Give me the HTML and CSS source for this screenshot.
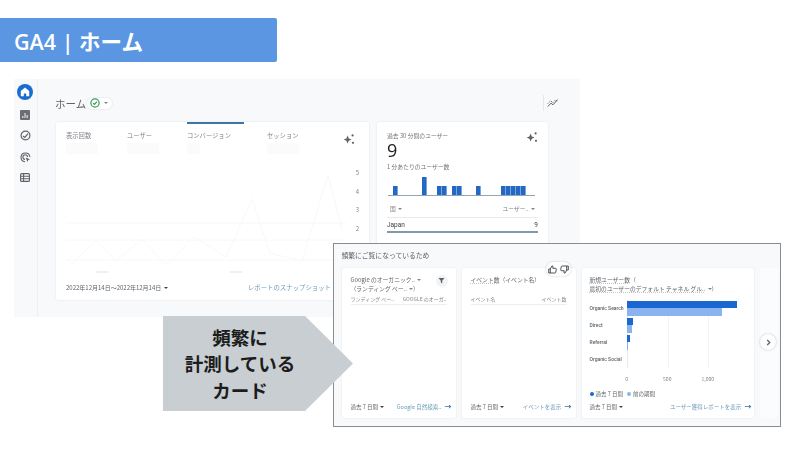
FILE: index.html
```html
<!DOCTYPE html>
<html lang="ja">
<head>
    <meta charset="UTF-8">
    <title>GA4 | ホーム</title>
    <link rel="stylesheet" href="styles.css">
</head>
<body>

<div class="slide">
    <h1 class="banner">GA4 | ホーム</h1>

    <!-- back screenshot -->
    <div class="home-shot">
        <div class="side">
            <span class="side-home">
                <svg width="12" height="12" viewBox="0 0 12 12"><path d="M6 1.5 1.8 5v5.2h3V7.4h2.4v2.8h3V5z" fill="#fff"/></svg>
            </span>
            <svg width="10" height="10" viewBox="0 0 10 10"><rect width="10" height="10" rx="1" fill="#6b6f73"/><path d="M2 8V6h1.5v2zM4.3 8V3h1.4v5zM6.5 8V5H8v3z" fill="#c9cbce"/></svg>
            <svg width="11" height="11" viewBox="0 0 11 11" fill="none" stroke="#5f6368" stroke-width="1.2"><circle cx="5.5" cy="5.5" r="4.4"/><path d="M3 6l1.8 1.4L8 3.6"/></svg>
            <svg width="11" height="11" viewBox="0 0 11 11" fill="none" stroke="#5f6368" stroke-width="1.1"><path d="M5 9.8A4.4 4.4 0 1 1 9.8 5"/><path d="M5 7.4A2.3 2.3 0 1 1 7.5 5"/><path d="M5.6 5.6l4.4 1.7-1.8.7-.7 1.9z" fill="#5f6368" stroke="none"/></svg>
            <svg width="10" height="9" viewBox="0 0 10 9" fill="none" stroke="#5f6368" stroke-width="1.1"><rect x=".6" y=".6" width="8.8" height="7.8" rx="1"/><path d="M.6 3.2h8.8M.6 5.8h8.8M3.6.6v7.8"/></svg>
        </div>
        <div class="home-main">
            <div class="home-head">
                <span class="home-title">ホーム</span>
                <span class="status-chip">
                    <svg width="10" height="10" viewBox="0 0 9 9" fill="none" stroke="#3c9a5a" stroke-width="1.1"><circle cx="4.5" cy="4.5" r="3.7"/><path d="M2.8 4.6l1.2 1.1 2.2-2.3"/></svg>
                    <i class="caret"></i>
                </span>
                <span class="trend">
                    <svg width="12" height="10" viewBox="0 0 12 10" fill="none" stroke="#5f6368" stroke-width="1"><path d="M.8 8.6l3.2-3.4 2 1.6L10.6 1.6"/><path d="M.8 5.6L3.6 2.8l2.4 1.8 2.2-2.4 2.8 1.4" stroke-dasharray="1.2 1"/></svg>
                </span>
            </div>
            <div class="home-cards">
                <div class="card overview">
                    <div class="tabs">
                        <div class="tab tab-views">表示回数<span class="ghost-num"></span></div>
                        <div class="tab tab-users">ユーザー<span class="ghost-num"></span></div>
                        <div class="tab tab-conv">コンバージョン<span class="ghost-num short"></span></div>
                        <div class="tab tab-sess">セッション<span class="ghost-num"></span></div>
                        <svg class="sparkle" width="12" height="12" viewBox="0 0 12 12" fill="#5f6368"><path d="M4.6 2.6 5.8 5.4 8.6 6.6 5.8 7.8 4.6 10.6 3.4 7.8.6 6.6 3.4 5.4z"/><circle cx="9.6" cy="2.4" r="1.1"/><circle cx="10" cy="9.8" r="1.1"/></svg>
                    </div>
                    <div class="line-chart">
                        <svg width="280" height="112" viewBox="0 0 280 112" fill="none" stroke="#f8f8f9">
                            <path d="M0 54H280M0 71H280M0 91H280"/>
                            <path d="M4 96 30 72 50 92 76 70 100 96 128 68 160 88 186 30 204 84 236 92 262 6 276 60"/>
                            <path d="M30 103H42M164 103H176" stroke="#eeeff0" stroke-width="2"/>
                        </svg>
                        <div class="y-axis"><span>5</span><span>4</span><span>3</span><span>2</span></div>
                    </div>
                    <div class="card-foot">
                        <span>2022年12月14日～2022年12月14日 <i class="caret dark"></i></span>
                        <span class="link">レポートのスナップショット</span>
                    </div>
                </div>
                <div class="card realtime">
                    <div class="rt-top">
                        <span class="rt-label">過去 30 分間のユーザー</span>
                        <svg width="12" height="12" viewBox="0 0 12 12" fill="#5f6368"><path d="M4.6 2.6 5.8 5.4 8.6 6.6 5.8 7.8 4.6 10.6 3.4 7.8.6 6.6 3.4 5.4z"/><circle cx="9.6" cy="2.4" r="1.1"/><circle cx="10" cy="9.8" r="1.1"/></svg>
                    </div>
                    <div class="rt-num">9</div>
                    <div class="rt-label">1 分あたりのユーザー数</div>
                    <svg class="rt-bars" width="148" height="20" viewBox="0 0 148 20">
                        <g fill="#2468c4">
                            <rect x="5" y="10" width="4.6" height="9"/>
                            <rect x="34" y="1" width="4.6" height="18"/>
                            <rect x="49" y="10" width="4.6" height="9"/>
                            <rect x="54" y="10" width="4.6" height="9"/>
                            <rect x="64" y="10" width="4.6" height="9"/>
                            <rect x="69" y="10" width="4.6" height="9"/>
                            <rect x="88" y="10" width="4.6" height="9"/>
                            <rect x="113" y="10" width="4.6" height="9"/>
                            <rect x="118" y="10" width="4.6" height="9"/>
                            <rect x="123" y="10" width="4.6" height="9"/>
                            <rect x="128" y="10" width="4.6" height="9"/>
                            <rect x="133" y="10" width="4.6" height="9"/>
                        </g>
                        <path d="M0 19.5H147" stroke="#8fa6b4"/>
                    </svg>
                    <div class="rt-head">
                        <span>国 <i class="caret"></i></span>
                        <span>ユーザー.. <i class="caret"></i></span>
                    </div>
                    <div class="rt-row">
                        <span>Japan</span>
                        <span>9</span>
                    </div>
                </div>
            </div>
        </div>
    </div>

    <!-- front screenshot -->
    <div class="freq-shot">
        <div class="freq-title">頻繁にご覧になっているため</div>
        <div class="freq-cards">
            <div class="card freq-card card-a">
                <div class="fc-title">
                    <span>Google のオーガニック.. <i class="caret"></i></span>
                    <span>（ランディング ペー.. <i class="caret"></i>）</span>
                    <span class="filter-btn">
                        <svg width="7" height="7" viewBox="0 0 7 7"><path d="M.5 1h6L4.2 3.8V6.4L2.8 5.6V3.8z" fill="#5f6368"/></svg>
                    </span>
                </div>
                <div class="fc-head"><span>ランディング ペー..</span><span>GOOGLE のオーガ..</span></div>
                <div class="fc-space"></div>
                <div class="fc-foot">
                    <span>過去 7 日間 <i class="caret dark"></i></span>
                    <span class="link">Google 自然検索.. <b class="arrow">→</b></span>
                </div>
            </div>
            <div class="card freq-card card-b">
                <div class="fc-title"><span><u>イベント数</u>（イベント名）</span></div>
                <div class="fc-head"><span>イベント名</span><span>イベント数</span></div>
                <div class="fc-space"></div>
                <div class="fc-foot">
                    <span>過去 7 日間 <i class="caret dark"></i></span>
                    <span class="link">イベントを表示 <b class="arrow">→</b></span>
                </div>
            </div>
            <div class="card freq-card card-c">
                <div class="fc-title">
                    <span><u>新規ユーザー数</u>（</span>
                    <span><u>最初のユーザーのデフォルト チャネル グル..</u> <i class="caret"></i>）</span>
                </div>
                <div class="bars">
                    <div class="bar-row"><span>Organic Search</span><div class="bar-pair"><i class="bar now" style="width:110px"></i><i class="bar prev" style="width:95px"></i></div></div>
                    <div class="bar-row"><span>Direct</span><div class="bar-pair"><i class="bar now" style="width:6px"></i><i class="bar prev" style="width:5px"></i></div></div>
                    <div class="bar-row"><span>Referral</span><div class="bar-pair"><i class="bar now" style="width:3px"></i><i class="bar prev" style="width:1px"></i></div></div>
                    <div class="bar-row"><span>Organic Social</span><div class="bar-pair"></div></div>
                </div>
                <div class="x-axis"><span>0</span><span>500</span><span>1,000</span></div>
                <div class="legend">
                    <span><i class="dot now"></i>過去 7 日間</span>
                    <span><i class="dot prev"></i>前の期間</span>
                </div>
                <div class="fc-foot">
                    <span>過去 7 日間 <i class="caret dark"></i></span>
                    <span class="link">ユーザー獲得レポートを表示 <b class="arrow">→</b></span>
                </div>
            </div>
            <div class="card card-d"></div>
        </div>
        <span class="thumbs">
            <svg width="9" height="9" viewBox="0 0 9 9" fill="none" stroke="#3c4043" stroke-width=".9"><path d="M.7 4h1.6v4H.7zM2.3 4 4 .8c.8 0 1.1.6 1 1.2L4.8 3.3h2.8c.5 0 .8.4.7.9L7.7 7.4c-.1.4-.4.6-.8.6H2.3"/></svg>
            <svg width="9" height="9" viewBox="0 0 9 9" fill="none" stroke="#3c4043" stroke-width=".9"><path d="M8.3 5H6.7V1h1.6zM6.7 5 5 8.2c-.8 0-1.1-.6-1-1.2l.2-1.3H1.4c-.5 0-.8-.4-.7-.9l.6-3.2c.1-.4.4-.6.8-.6h4.6"/></svg>
        </span>
        <span class="next-btn">
            <svg width="7" height="7" viewBox="0 0 7 7" fill="none" stroke="#5f6368" stroke-width="1.3"><path d="M2.2 1l2.6 2.5L2.2 6"/></svg>
        </span>
    </div>

    <div class="callout">
        <p>頻繁に<br>計測している<br>カード</p>
    </div>
</div>

</body>
</html>
```
FILE: styles.css
```css
* {
    box-sizing: border-box;
}
body {
    margin: 0;
    background-color: #fff;
    font-family: "Noto Sans CJK JP", "Noto Sans", sans-serif;
}
.slide {
    position: relative;
    width: 800px;
    height: 450px;
    overflow: hidden;
    background-color: #fff;
}

/* banner */
.banner {
    position: absolute;
    left: 0;
    top: 18px;
    width: 277px;
    height: 44px;
    margin: 0;
    padding-left: 14px;
    display: flex;
    align-items: center;
    background-color: #5b96e3;
    border-radius: 0 2px 2px 0;
    color: #fff;
    font-family: "Open Sans", "Noto Sans CJK JP", sans-serif;
    font-size: 21.5px;
    font-weight: 600;
    white-space: pre;
}

/* shared bits */
.card {
    background-color: #fff;
    border-radius: 2px;
    box-shadow: 0 0 2px rgba(60, 64, 67, 0.12);
}
.caret {
    display: inline-block;
    width: 0;
    height: 0;
    margin-left: 1px;
    vertical-align: middle;
    border-left: 2px solid transparent;
    border-right: 2px solid transparent;
    border-top: 2.5px solid #80868b;
}
.caret.dark {
    border-top-color: #3c4043;
}
.link {
    color: #6b9cb8;
}

/* home screenshot */
.home-shot {
    position: absolute;
    left: 14px;
    top: 79px;
    width: 566px;
    height: 238px;
    display: flex;
    background-color: #f7f9fb;
    filter: blur(0.3px);
}
.side {
    width: 24px;
    display: flex;
    flex-direction: column;
    align-items: center;
    padding-top: 5px;
    padding-right: 1px;
    gap: 10.5px;
    border-right: 1px solid #eef0f3;
}
.side-home {
    width: 16px;
    height: 16px;
    margin-bottom: -1px;
    display: flex;
    align-items: center;
    justify-content: center;
    border-radius: 50%;
    background-color: #1a6dd0;
}
.home-main {
    flex: 1;
    padding: 0 32px 17px 18px;
    display: flex;
    flex-direction: column;
}
.home-head {
    height: 43px;
    padding-top: 5px;
    margin-left: -1px;
    display: flex;
    align-items: center;
}
.home-title {
    font-size: 10.5px;
    color: #5f6368;
}
.status-chip {
    width: 27px;
    height: 13px;
    display: flex;
    align-items: center;
    gap: 3px;
    padding-left: 3px;
    background-color: #fff;
    border: 1px solid #eceef0;
    border-radius: 7px;
}
.trend {
    margin-left: auto;
    margin-right: -11px;
    padding-left: 3px;
    border-left: 1px solid #e6e8eb;
    height: 16px;
    display: flex;
    align-items: center;
}
.home-cards {
    flex: 1;
    display: flex;
    gap: 8px;
}
.overview {
    width: 313px;
    display: flex;
    flex-direction: column;
    padding: 9px 10px 7px;
}
.tabs {
    position: relative;
    height: 38px;
    display: flex;
    font-size: 6.3px;
    line-height: 9px;
    color: #80868b;
}
.tab {
    display: flex;
    flex-direction: column;
    gap: 3px;
}
.tab-views { width: 61px; }
.tab-users { width: 60px; }
.tab-conv { width: 80px; }
.tab-conv::before {
    content: "";
    position: absolute;
    top: -9px;
    left: 121px;
    width: 57px;
    height: 2px;
    background-color: #3f74a8;
}
.ghost-num {
    width: 32px;
    height: 11px;
    background-color: #fbfbfc;
}
.ghost-num.short {
    width: 13px;
}
.sparkle {
    position: absolute;
    right: 4px;
    top: 2px;
}
.line-chart {
    flex: 1;
    display: flex;
    align-items: flex-end;
    justify-content: space-between;
}
.y-axis {
    align-self: flex-start;
    margin-top: -1px;
    display: flex;
    flex-direction: column;
    gap: 9.5px;
    font-size: 6px;
    line-height: 9px;
    color: #80868b;
}
.card-foot {
    display: flex;
    justify-content: space-between;
    align-items: center;
    height: 12px;
    font-size: 6px;
    color: #5f6368;
}
.card-foot .link {
    font-size: 6.4px;
    padding-right: 28px;
}
.realtime {
    width: 171px;
    padding: 9px 10px 0;
}
.rt-top {
    display: flex;
    justify-content: space-between;
    align-items: flex-start;
}
.rt-label {
    font-size: 5.8px;
    line-height: 9px;
    color: #70757a;
}
.rt-num {
    margin-top: -5px;
    font-family: "Open Sans", sans-serif;
    font-size: 18px;
    line-height: 24px;
    color: #202124;
}
.rt-bars {
    display: block;
    margin-top: 5px;
    margin-left: 1px;
}
.rt-head {
    display: flex;
    justify-content: space-between;
    height: 22px;
    padding: 8px 3px 0;
    font-size: 5.8px;
    line-height: 9px;
    color: #80868b;
    border-bottom: 1px solid #e8eaed;
}
.rt-row {
    display: flex;
    justify-content: space-between;
    height: 15px;
    padding-top: 3px;
    font-family: "Roboto", sans-serif;
    font-size: 6.5px;
    line-height: 9px;
    color: #3c4043;
    border-bottom: 2px solid #7f9aa8;
}

/* frequent cards screenshot */
.freq-shot {
    position: absolute;
    left: 333px;
    top: 243px;
    width: 448px;
    height: 184px;
    padding: 6px 0 8.5px 7.5px;
    display: flex;
    flex-direction: column;
    background-color: #f8f9fb;
    border: 1.5px solid #8a8d90;
    filter: blur(0.3px);
}
.freq-title {
    height: 17.5px;
    font-size: 6.8px;
    line-height: 10px;
    color: #5f6368;
}
.freq-cards {
    flex: 1;
    display: flex;
    gap: 6px;
    min-height: 0;
}
.freq-card {
    flex-shrink: 0;
    padding: 7px 9px 5px;
    display: flex;
    flex-direction: column;
}
.card-a, .card-b { width: 114px; }
.card-c { width: 172px; padding-left: 8px; padding-right: 7px; }
.card-d { width: 18px; background-color: #fbfcfd; box-shadow: none; }
.fc-title {
    position: relative;
    display: flex;
    flex-direction: column;
    height: 19px;
    font-size: 5.8px;
    line-height: 9px;
    color: #5f6368;
}
.fc-title u {
    text-decoration: underline dotted #c4c7ca;
    text-underline-offset: 1px;
}
.filter-btn {
    position: absolute;
    right: -1px;
    top: 0;
    width: 12px;
    height: 12px;
    display: flex;
    align-items: center;
    justify-content: center;
    border-radius: 50%;
    background-color: #f1f3f4;
}
.fc-head {
    display: flex;
    justify-content: space-between;
    height: 10px;
    margin-top: 1px;
    font-size: 5px;
    line-height: 8px;
    color: #80868b;
    border-bottom: 1px solid #eceef0;
    white-space: nowrap;
}
.fc-head + .fc-space {
    flex: 1;
}
.fc-foot {
    display: flex;
    justify-content: space-between;
    align-items: center;
    height: 11px;
    font-size: 5.5px;
    line-height: 11px;
    color: #5f6368;
    white-space: nowrap;
}
.fc-foot .link {
    margin-right: -5px;
    font-size: 5.5px;
}
.arrow {
    margin-left: 2px;
    font-size: 7px;
    font-weight: 700;
    color: #3f74a8;
}
.bars {
    margin-top: 6px;
    height: 68px;
    display: flex;
    flex-direction: column;
    background-image: linear-gradient(#e8eaed, #e8eaed), linear-gradient(#f3f4f5, #f3f4f5), linear-gradient(#f3f4f5, #f3f4f5);
    background-size: 1px 100%;
    background-position: 37px 0, 78px 0, 118px 0;
    background-repeat: no-repeat;
}
.bar-row {
    height: 17px;
    display: flex;
    align-items: center;
    font-family: "Roboto", sans-serif;
    font-size: 5px;
    font-weight: 500;
    color: #5f6368;
}
.bar-row span {
    width: 37px;
    white-space: nowrap;
}
.bar-pair {
    display: flex;
    flex-direction: column;
}
.bar {
    display: block;
    height: 7.5px;
}
.now { background-color: #1a67d2; }
.prev { background-color: #8ab4f0; }
.x-axis {
    height: 16px;
    padding: 7px 0 0 17px;
    display: flex;
    font-size: 5px;
    line-height: 7px;
    color: #80868b;
}
.x-axis span {
    width: 40.5px;
    text-align: center;
}
.legend {
    display: flex;
    gap: 4px;
    margin-top: auto;
    margin-bottom: 2px;
    height: 11px;
    font-size: 5.5px;
    line-height: 10px;
    color: #5f6368;
}
.dot {
    display: inline-block;
    width: 4px;
    height: 4px;
    margin-right: 2px;
    border-radius: 50%;
}
.thumbs {
    position: absolute;
    left: 212px;
    top: 18px;
    width: 25px;
    height: 14px;
    display: flex;
    align-items: center;
    justify-content: center;
    gap: 3px;
    border-radius: 7px;
    background-color: #fff;
    box-shadow: 0 0 2px rgba(60, 64, 67, 0.3);
}
.next-btn {
    position: absolute;
    left: 426px;
    top: 90px;
    width: 16px;
    height: 16px;
    display: flex;
    align-items: center;
    justify-content: center;
    border-radius: 50%;
    background-color: #fff;
    box-shadow: 0 0 2px rgba(60, 64, 67, 0.35);
}

/* callout arrow */
.callout {
    position: absolute;
    left: 163px;
    top: 316px;
    width: 190px;
    height: 95px;
    padding-right: 36px;
    display: flex;
    align-items: center;
    justify-content: center;
    background-color: #c8ced2;
    clip-path: polygon(0 0, 142px 0, 100% 50%, 142px 100%, 0 100%);
}
.callout p {
    margin: 0;
    text-align: center;
    font-size: 18.5px;
    font-weight: 700;
    line-height: 26.5px;
    color: #1c1c1c;
}
```
